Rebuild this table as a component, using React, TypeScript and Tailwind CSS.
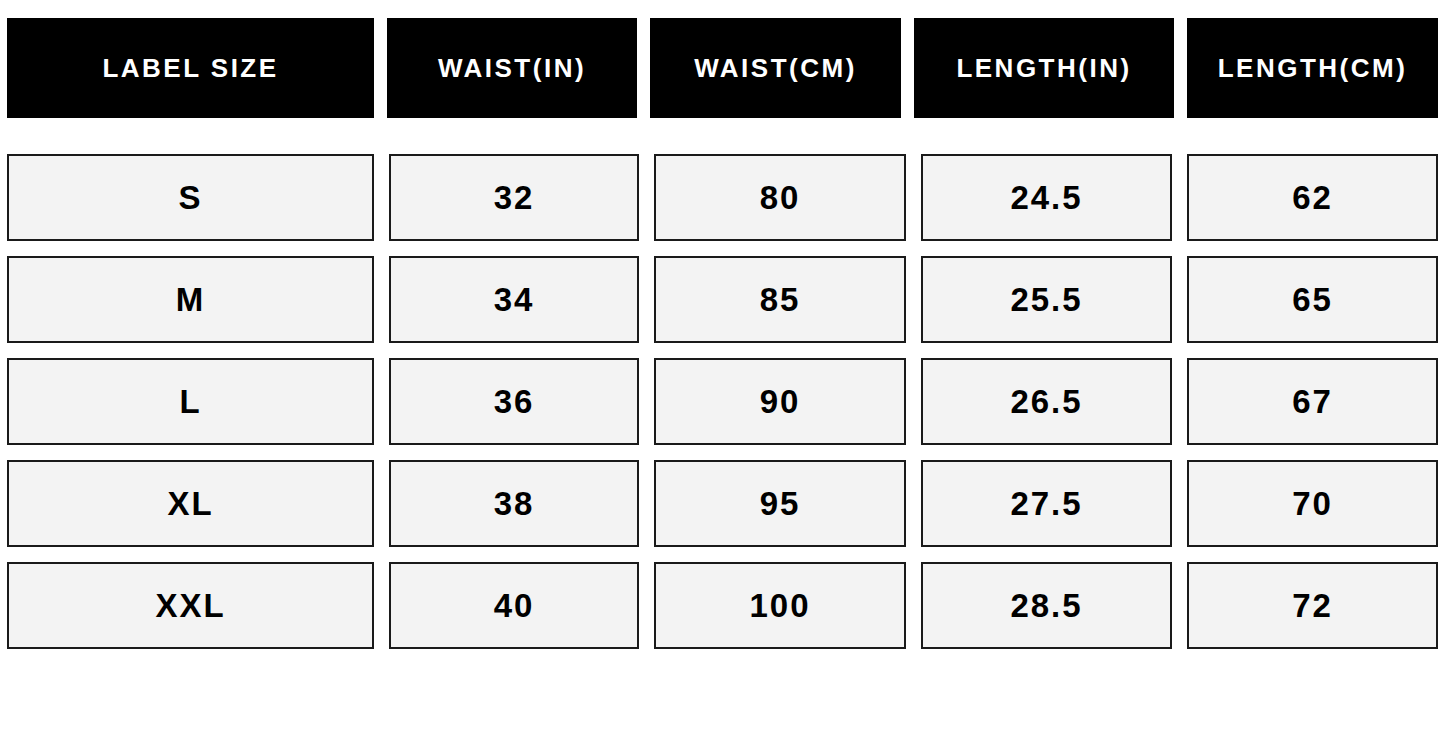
import React from 'react';

const headers = [
  { label: 'LABEL SIZE', w: 'w-[367px]' },
  { label: 'WAIST(IN)', w: 'w-[250px]' },
  { label: 'WAIST(CM)', w: 'w-[251px]' },
  { label: 'LENGTH(IN)', w: 'w-[260px]' },
  { label: 'LENGTH(CM)', w: 'w-[251px]' },
];

const colWidths = ['w-[367px]', 'w-[250px]', 'w-[252px]', 'w-[251px]', 'w-[251px]'];

const rows = [
  ['S', '32', '80', '24.5', '62'],
  ['M', '34', '85', '25.5', '65'],
  ['L', '36', '90', '26.5', '67'],
  ['XL', '38', '95', '27.5', '70'],
  ['XXL', '40', '100', '28.5', '72'],
];

export default function App() {
  return (
    <div className="w-[1445px] h-[733px] bg-white font-['Liberation_Sans',Arial,sans-serif]">
      <div className="flex gap-[13px] pl-[7px] pt-[18px]">
        {headers.map((h) => (
          <div
            key={h.label}
            className={`${h.w} h-[100px] bg-black flex items-center justify-center text-white font-bold text-[26px] tracking-[2.5px]`}
          >
            {h.label}
          </div>
        ))}
      </div>

      <div className="flex flex-col gap-[15px] pl-[7px] pt-[36px]">
        {rows.map((row) => (
          <div key={row[0]} className="flex gap-[15px]">
            {row.map((cell, i) => (
              <div
                key={i}
                className={`${colWidths[i]} h-[87px] bg-[#f3f3f3] border-2 border-[#1a1a1a] flex items-center justify-center text-black font-bold text-[33px] tracking-[2px]`}
              >
                {cell}
              </div>
            ))}
          </div>
        ))}
      </div>
    </div>
  );
}
